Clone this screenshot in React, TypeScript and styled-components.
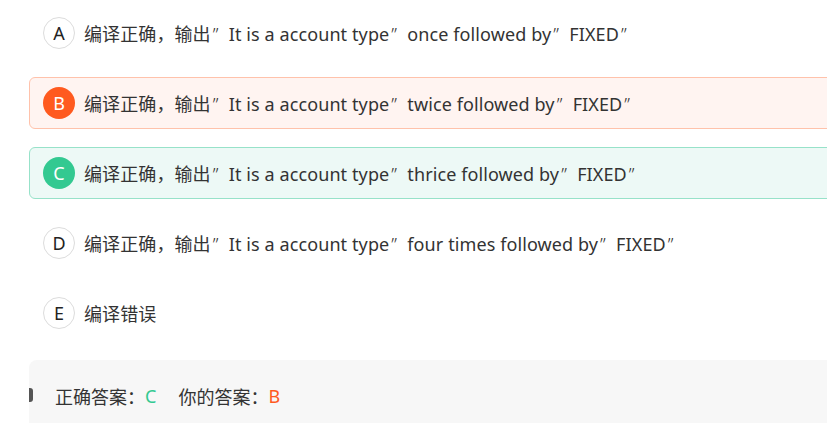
import styled, { createGlobalStyle } from "styled-components";

type Status = "normal" | "wrong" | "right";

const options: { key: string; text: string; status: Status }[] = [
  { key: "A", text: "编译正确，输出”It is a account type”once followed by”FIXED”", status: "normal" },
  { key: "B", text: "编译正确，输出”It is a account type”twice followed by”FIXED”", status: "wrong" },
  { key: "C", text: "编译正确，输出”It is a account type”thrice followed by”FIXED”", status: "right" },
  { key: "D", text: "编译正确，输出”It is a account type”four times followed by”FIXED”", status: "normal" },
  { key: "E", text: "编译错误", status: "normal" },
];

// full-width quotes like the original font renders them
function renderText(text: string) {
  return text.split(/(”)/).map((part, i) =>
    part === "”" ? <Quote key={i}>”</Quote> : <span key={i}>{part}</span>
  );
}

export default function App() {
  return (
    <>
      <GlobalStyle />
      <Page>
        <OptionList>
          {options.map((o) => (
            <OptionRow key={o.key} status={o.status}>
              <Letter status={o.status}>{o.key}</Letter>
              <OptionText>{renderText(o.text)}</OptionText>
            </OptionRow>
          ))}
        </OptionList>
        <AnswerBox>
          <Marker />
          <AnswerLabel>正确答案：</AnswerLabel>
          <AnswerValue tone="right">C</AnswerValue>
          <AnswerLabel>你的答案：</AnswerLabel>
          <AnswerValue tone="wrong">B</AnswerValue>
        </AnswerBox>
      </Page>
    </>
  );
}

const GlobalStyle = createGlobalStyle`
  html, body {
    margin: 0;
    padding: 0;
    background: #fff;
    overflow: hidden;
  }
  body {
    font-family: "Noto Sans", "Noto Sans CJK SC", sans-serif;
    color: #333;
  }
`;

const Page = styled.div`
  width: 827px;
  height: 423px;
  overflow: hidden;
  padding: 7px 0 0 29px;
  box-sizing: border-box;
`;

const OptionList = styled.div`
  display: flex;
  flex-direction: column;
  gap: 18px;
  width: 900px;
`;

const OptionRow = styled.div<{ status: Status }>`
  display: flex;
  align-items: center;
  gap: 9px;
  height: 52px;
  box-sizing: border-box;
  padding-left: 13px;
  border-radius: 6px;
  border: 1px solid
    ${(p) => (p.status === "wrong" ? "#ffc2ab" : p.status === "right" ? "#97e2c9" : "transparent")};
  background: ${(p) => (p.status === "wrong" ? "#fff4f1" : p.status === "right" ? "#edf9f6" : "transparent")};
`;

const Letter = styled.div<{ status: Status }>`
  width: 32px;
  height: 32px;
  border-radius: 50%;
  box-sizing: border-box;
  display: flex;
  align-items: center;
  justify-content: center;
  font-size: 18px;
  flex-shrink: 0;
  color: ${(p) => (p.status === "normal" ? "#222" : "#fff")};
  border: 1px solid ${(p) => (p.status === "normal" ? "#dcdcdc" : "transparent")};
  background: ${(p) => (p.status === "wrong" ? "#ff5a1f" : p.status === "right" ? "#33c991" : "#fff")};
`;

const OptionText = styled.span`
  font-size: 18px;
  letter-spacing: 0.1px;
  color: #333;
  white-space: nowrap;
`;

const Quote = styled.span`
  display: inline-block;
  width: 1em;
  padding-left: 2px;
  box-sizing: border-box;
  font-family: "Noto Sans", sans-serif;
  font-weight: 300;
  text-align: left;
`;

const AnswerBox = styled.div`
  position: relative;
  display: flex;
  align-items: center;
  margin-top: 21px;
  width: 900px;
  height: 72px;
  padding-left: 26px;
  box-sizing: border-box;
  background: #f7f7f7;
  border-radius: 8px 0 0 0;
`;

const Marker = styled.span`
  position: absolute;
  left: 0;
  top: 28px;
  width: 4px;
  height: 14px;
  background: #555;
  border-radius: 0 3px 3px 0;
`;

const AnswerLabel = styled.span`
  font-size: 18px;
  color: #333;
`;

const AnswerValue = styled.span<{ tone: "right" | "wrong" }>`
  font-size: 18px;
  margin-right: 22px;
  color: ${(p) => (p.tone === "right" ? "#33c991" : "#ff5a1f")};
`;
